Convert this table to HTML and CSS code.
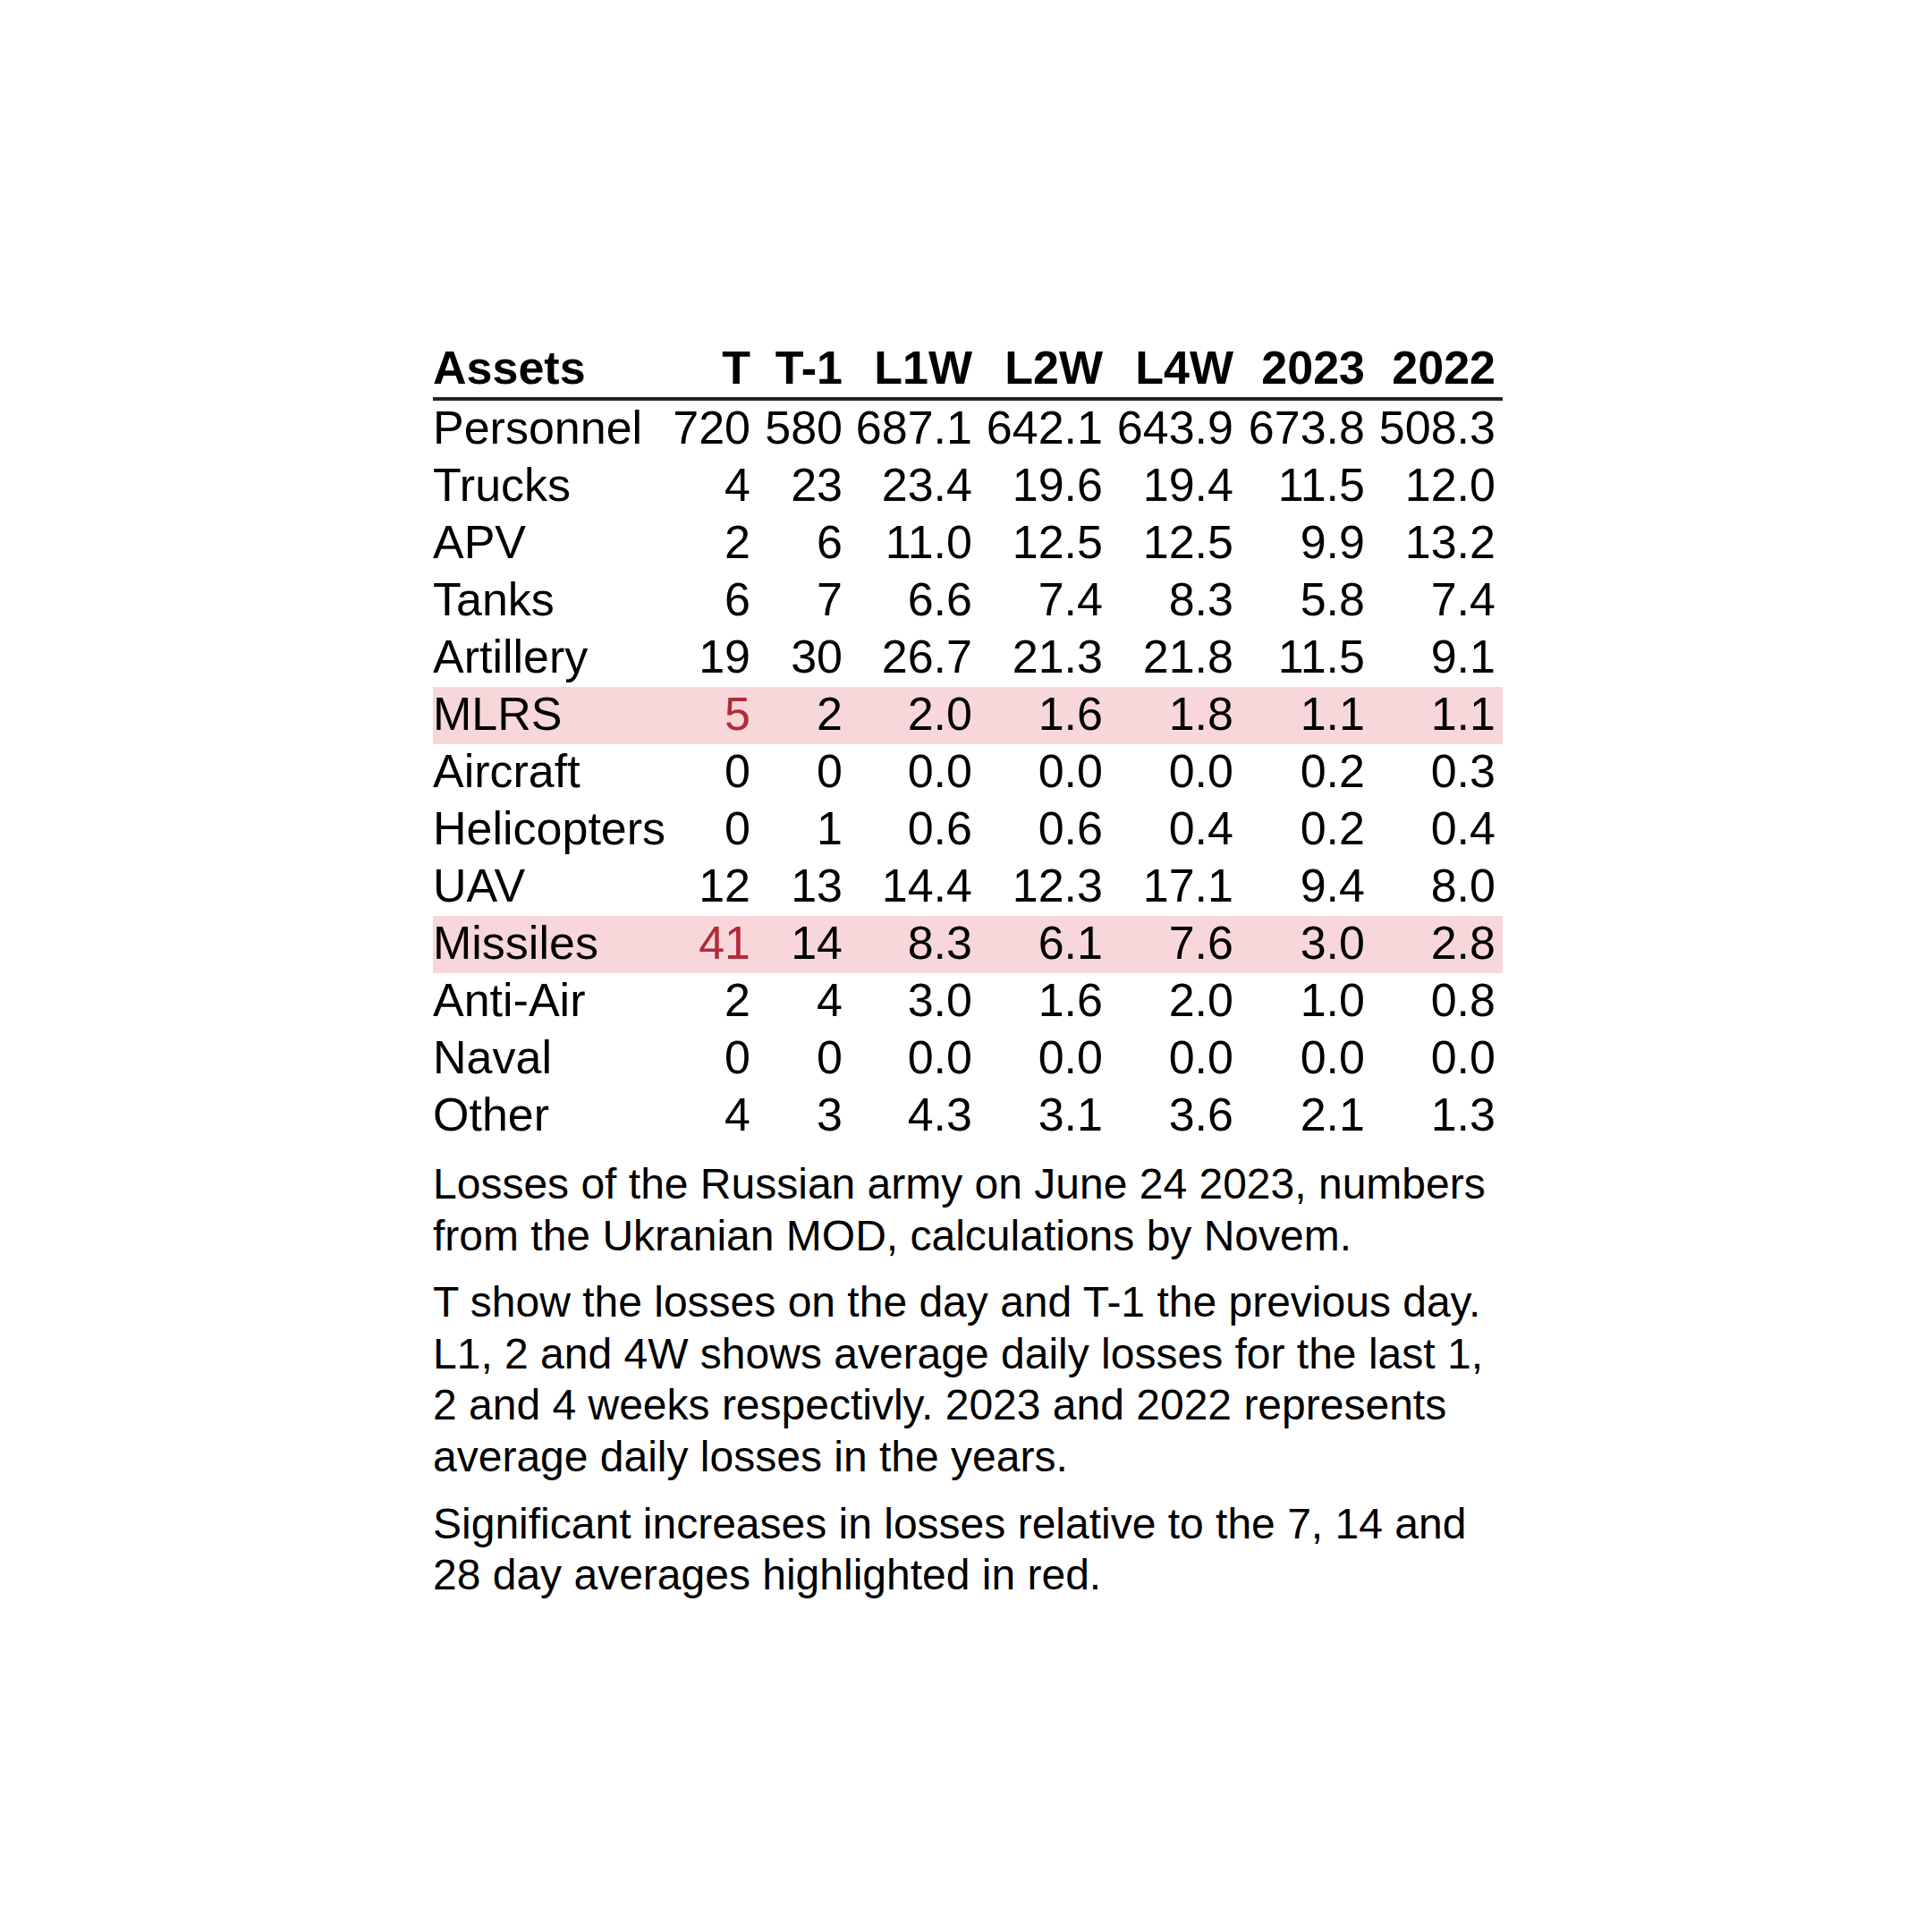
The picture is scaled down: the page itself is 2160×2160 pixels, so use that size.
FILE: index.html
```html
<!DOCTYPE html>
<html lang="en">
<head>
<meta charset="utf-8">
<title>Losses of the Russian army</title>
<link rel="stylesheet" href="styles.css">
</head>
<body>
<main class="wrap">
  <table class="losses">
    <colgroup>
      <col class="c-asset">
      <col class="c-t">
      <col class="c-t1">
      <col class="c-w">
      <col class="c-w2">
      <col class="c-w2">
      <col class="c-y">
      <col class="c-w2">
    </colgroup>
    <thead>
      <tr>
        <th class="lbl">Assets</th>
        <th>T</th><th>T-1</th><th>L1W</th><th>L2W</th><th>L4W</th><th>2023</th><th>2022</th>
      </tr>
    </thead>
    <tbody>
      <tr><td class="lbl">Personnel</td><td>720</td><td>580</td><td>687.1</td><td>642.1</td><td>643.9</td><td>673.8</td><td>508.3</td></tr>
      <tr><td class="lbl">Trucks</td><td>4</td><td>23</td><td>23.4</td><td>19.6</td><td>19.4</td><td>11.5</td><td>12.0</td></tr>
      <tr><td class="lbl">APV</td><td>2</td><td>6</td><td>11.0</td><td>12.5</td><td>12.5</td><td>9.9</td><td>13.2</td></tr>
      <tr><td class="lbl">Tanks</td><td>6</td><td>7</td><td>6.6</td><td>7.4</td><td>8.3</td><td>5.8</td><td>7.4</td></tr>
      <tr><td class="lbl">Artillery</td><td>19</td><td>30</td><td>26.7</td><td>21.3</td><td>21.8</td><td>11.5</td><td>9.1</td></tr>
      <tr class="hl"><td class="lbl">MLRS</td><td class="up">5</td><td>2</td><td>2.0</td><td>1.6</td><td>1.8</td><td>1.1</td><td>1.1</td></tr>
      <tr><td class="lbl">Aircraft</td><td>0</td><td>0</td><td>0.0</td><td>0.0</td><td>0.0</td><td>0.2</td><td>0.3</td></tr>
      <tr><td class="lbl">Helicopters</td><td>0</td><td>1</td><td>0.6</td><td>0.6</td><td>0.4</td><td>0.2</td><td>0.4</td></tr>
      <tr><td class="lbl">UAV</td><td>12</td><td>13</td><td>14.4</td><td>12.3</td><td>17.1</td><td>9.4</td><td>8.0</td></tr>
      <tr class="hl"><td class="lbl">Missiles</td><td class="up">41</td><td>14</td><td>8.3</td><td>6.1</td><td>7.6</td><td>3.0</td><td>2.8</td></tr>
      <tr><td class="lbl">Anti-Air</td><td>2</td><td>4</td><td>3.0</td><td>1.6</td><td>2.0</td><td>1.0</td><td>0.8</td></tr>
      <tr><td class="lbl">Naval</td><td>0</td><td>0</td><td>0.0</td><td>0.0</td><td>0.0</td><td>0.0</td><td>0.0</td></tr>
      <tr><td class="lbl">Other</td><td>4</td><td>3</td><td>4.3</td><td>3.1</td><td>3.6</td><td>2.1</td><td>1.3</td></tr>
    </tbody>
  </table>
  <div class="notes">
    <p>Losses of the Russian army on June 24 2023, numbers from the Ukranian MOD, calculations by Novem.</p>
    <p>T show the losses on the day and T-1 the previous day. L1, 2 and 4W shows average daily losses for the last 1, 2 and 4 weeks respectivly. 2023 and 2022 represents average daily losses in the years.</p>
    <p>Significant increases in losses relative to the 7, 14 and 28 day averages highlighted in red.</p>
  </div>
</main>
</body>
</html>
```

FILE: styles.css
```css
html, body {
  margin: 0;
  padding: 0;
  background: #ffffff;
}

body {
  font-family: "Liberation Sans", Arial, sans-serif;
  color: #000000;
}

.wrap {
  width: 1196px;
  margin: 0 0 0 484px;
  padding-top: 381px;
}

.losses {
  width: 1196px;
  table-layout: fixed;
  border-collapse: collapse;
  border-spacing: 0;
  font-size: 52px;
}

.c-asset { width: 267px; }
.c-t { width: 96px; }
.c-t1 { width: 103px; }
.c-w { width: 145px; }
.c-w2 { width: 146px; }
.c-y { width: 147px; }

.losses th,
.losses td {
  height: 60px;
  padding: 0 8px 4px 0;
  text-align: right;
  white-space: nowrap;
  line-height: 60px;
  vertical-align: middle;
}

.losses th {
  font-weight: bold;
  padding-bottom: 3px;
  border-bottom: 4px solid #222222;
}

.losses .lbl {
  text-align: left;
  padding-left: 0;
}

.losses tr.hl td {
  background: #f8d7da;
}

.losses td.up {
  color: #b02a37;
}

.notes {
  margin-top: 15px;
  font-size: 48px;
  line-height: 1.2;
}

.notes p {
  margin: 0 0 17px 0;
}
```
